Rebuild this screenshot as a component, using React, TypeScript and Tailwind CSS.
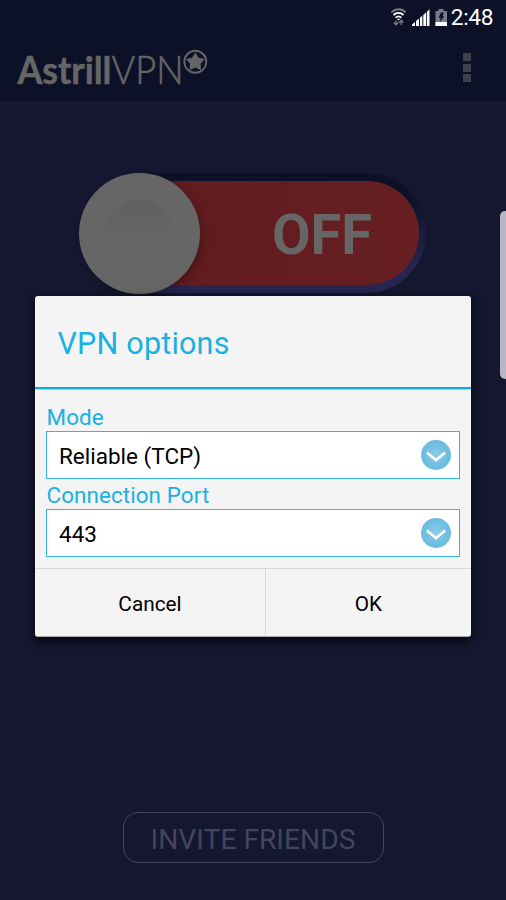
import React from "react";

function StatusBar() {
    return (
        <div className="flex h-9 items-center justify-end pr-[13px] text-white">
            <svg width="60" height="28" viewBox="0 0 60 28">
                <g fill="none">
                    <path d="M0.3 8.3C4.5 4.1 10.5 4.1 14.7 8.3" stroke="#777b8c" strokeWidth="2" />
                    <path d="M2.5 11C5.5 8.2 9.5 8.2 12.5 11" stroke="#fff" strokeWidth="2" />
                    <path d="M4.6 13.6C6.4 12 8.6 12 10.4 13.6" stroke="#fff" strokeWidth="1.7" />
                </g>
                <path d="M5.7 14.7H9.3L7.5 16.6Z" fill="#fff" />
                <path d="M5 16.5V20.5M2.8 18.5L5 20.9L7.2 18.5M10.2 21V16.5M8 18.6L10.2 16.2L12.4 18.6" fill="none" stroke="#777b8c" strokeWidth="1.3" />
                <path d="M21 22V20.4L24 18V22ZM25 22V17L28 14.5V22ZM29 22V13.6L31.3 11.7V22ZM32.3 22V11L35 8.6V22ZM35.8 22V8L38.5 5.2V22Z" fill="#fff" />
                <path d="M47.5 5H52.5V7H56V22H44.5V7H47.5Z" fill="#777b8c" />
                <path d="M44.5 18H56V22H44.5Z" fill="#fff" />
                <path d="M50 8.5H53L51.5 12.2H53.3L48.5 18.5L49.7 13.7H47.5Z" fill="#0c1127" />
            </svg>
            <span className="text-[22.7px] leading-9 tracking-[-0.4px]">2:48</span>
        </div>
    );
}

function Logo() {
    return (
        <svg width="200" height="50" viewBox="0 0 200 50" fill="#666" className="font-[Lato,sans-serif]">
            <text x="0.5" y="40.2" fontSize="38.5" fontWeight="700" textLength="94" lengthAdjust="spacingAndGlyphs" stroke="#666" strokeWidth="0.5">Astrill</text>
            <text x="94.5" y="40.2" fontSize="38.5" fontWeight="300" textLength="72" lengthAdjust="spacingAndGlyphs" stroke="#666" strokeWidth="0.6">VPN</text>
            <circle cx="178.3" cy="17.8" r="11" fill="none" stroke="#666" strokeWidth="1.9" />
            <path d="M178.3 8.2L181.5 13.8L187.8 15.1L183.5 19.8L184.2 26.2L178.3 23.6L172.4 26.2L173.1 19.8L168.8 15.1L175.1 13.8Z" />
        </svg>
    );
}

function PowerSwitch() {
    return (
        <div className="mx-[79px] mt-[72px] h-[120px] w-[347px] rounded-full bg-linear-to-b from-[#0c1127] from-20% to-[#27254f] to-75% py-2 pr-[7px] pl-2">
            <div className="relative flex h-[104px] items-center justify-end rounded-full bg-linear-to-r from-[#5e1a1e] to-[#671f22] pr-[47px]">
                <div className="absolute top-[-8px] left-[-8px] flex size-[121px] items-center justify-center rounded-full bg-[#666] shadow-[3px_4px_7px_rgba(0,0,0,0.22)]">
                    <div className="size-[69px] rounded-full bg-linear-to-b from-[#606060] to-[#666] to-60%" />
                </div>
                <span className="pt-[3px] text-[56px] leading-none font-bold text-[#666]">OFF</span>
            </div>
        </div>
    );
}

function SelectField({ label, value }: { label: string; value: string }) {
    return (
        <div className="h-[78px]">
            <div className="flex h-[30px] items-center pt-[4px] pl-[0.5px] text-[22.4px] tracking-[0.1px] text-[#19b0e4]">{label}</div>
            <div className="flex h-12 items-center justify-between border-[1.5px] border-[#35b5e5] bg-white pr-2 pl-3">
                <span className="pt-[3px] text-[22.5px] text-black">{value}</span>
                <svg width="30" height="30" viewBox="0 0 30 30">
                    <defs>
                        <radialGradient id="knob">
                            <stop offset="0" stopColor="#8ccbe9" />
                            <stop offset="1" stopColor="#68bbdf" />
                        </radialGradient>
                    </defs>
                    <circle cx="15" cy="15" r="15" fill="url(#knob)" />
                    <path d="M5.8 12.5L15 20L24.2 12.5" fill="none" stroke="#fff" strokeWidth="2.6" />
                </svg>
            </div>
        </div>
    );
}

function OptionsDialog() {
    return (
        <div className="absolute top-[296px] left-[35px] flex h-[341px] w-[436px] flex-col rounded-[3px] border-b border-[#aaa] bg-[#f4f4f4] shadow-[0_3px_8px_1px_rgba(0,0,0,0.7)]">
            <h1 className="flex h-[93px] items-center border-b-2 border-[#0cabdf] pt-[5px] pl-[22.5px] text-[30.5px] tracking-[0.2px] text-[#19b0e4] shadow-[0_1px_0_#9fd9ef]">VPN options</h1>
            <div className="flex flex-1 flex-col px-[11px] pt-3">
                <SelectField label="Mode" value="Reliable (TCP)" />
                <SelectField label="Connection Port" value="443" />
            </div>
            <div className="flex h-[68px] border-t border-[#d9d9d9] text-[20.8px] text-black">
                <button className="w-[231px] border-r border-[#d9d9d9] pt-[4px]">Cancel</button>
                <button className="flex-1 pt-[4px]">OK</button>
            </div>
        </div>
    );
}

export default function App() {
    return (
        <div className="relative flex h-[900px] w-[506px] flex-col overflow-hidden bg-[#14172f] font-[Roboto,sans-serif]">
            <header className="h-[101px] bg-[#0c1127]">
                <StatusBar />
                <div className="flex h-[65px] justify-between pr-[35px] pl-[17px]">
                    <div className="pt-2">
                        <Logo />
                    </div>
                    <div className="flex flex-col gap-[2.5px] pt-[17px]">
                        <div className="size-[8px] bg-[#3d404d]" />
                        <div className="size-[8px] bg-[#3d404d]" />
                        <div className="size-[8px] bg-[#3d404d]" />
                    </div>
                </div>
            </header>
            <PowerSwitch />
            <div className="mt-auto mb-[37px] flex justify-center">
                <button className="h-[51px] w-[261px] rounded-[15px] border-[1.5px] border-[#42455d] pt-[5px] text-[28.2px] text-[#42455d]">INVITE FRIENDS</button>
            </div>
            <div className="absolute top-[211px] right-0 h-[168px] w-[6px] rounded-l-[5px] bg-[#b8b7c1]" />
            <OptionsDialog />
        </div>
    );
}
